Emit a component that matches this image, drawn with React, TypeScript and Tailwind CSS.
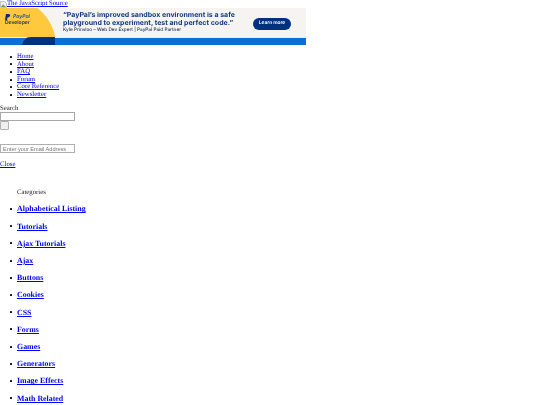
const navLinks = ["Home", "About", "FAQ", "Forum", "Core Reference", "Newsletter"];
const categories = [
  "Alphabetical Listing",
  "Tutorials",
  "Ajax Tutorials",
  "Ajax",
  "Buttons",
  "Cookies",
  "CSS",
  "Forms",
  "Games",
  "Generators",
  "Image Effects",
  "Math Related",
];

const Bullet = () => {
  return <span className="-ml-[7px] mr-[5px] h-[2px] w-[2px] shrink-0 rounded-[0.5px] bg-[#111]" />;
};

const PayPalBanner = () => {
  return (
    <div className="relative h-[37px] w-[306px] overflow-hidden bg-[#f5f4f1] font-['Inter',sans-serif]">
      <svg className="absolute left-0 top-0" width="306" height="37" viewBox="0 0 306 37">
        <path d="M0 0H37C47 7 54 20 55 37H0Z" fill="#ffc83d" />
        <rect x="0" y="29" width="306" height="8" fill="#0a6fd8" />
        <path d="M0 29H306V30H0Z" fill="#dff1fb" />
        <path d="M0 0H37C47 7 54 20 55 29H0Z" fill="#ffc83d" />
        <path d="M0 29H55V37H22C22 32 26 29 31 29Z" fill="#ffc83d" />
        <path d="M22 37C22 32 26 29 31 29H55V37Z" fill="#00307f" />
        <path d="M6 6H8.5C10 6 10.5 7 10 8C9.6 9 8.7 9.2 7.6 9.2L7 12H5Z" fill="#002a7a" />
      </svg>
      <div className="relative flex h-[29px] items-start">
        <div className="ml-[5px] mt-[5.5px] w-[58px] text-[5px] font-semibold leading-[6.5px] text-[#0f2a55]">
          <div className="pl-[8px] italic text-[#174a9c]">PayPal</div>
          <div>Developer</div>
        </div>
        <div className="mt-[2.5px] w-[185px] whitespace-nowrap text-[#143a80]">
          <div className="text-[7px] font-bold leading-[8.2px]">
            “PayPal’s improved sandbox environment is a safe
            <br />
            playground to experiment, test and perfect code.”
          </div>
          <div className="mt-[0.5px] text-[4.7px] font-medium leading-[6px] text-[#1a2f55]">
            Kyle Prinsloo – Web Dev Expert | PayPal Paid Partner
          </div>
        </div>
        <div className="ml-[5px] mt-[9.5px] flex h-[12px] w-[38px] items-center justify-center rounded-full bg-[#00307f] text-[4.8px] font-semibold text-white">
          Learn more
        </div>
      </div>
    </div>
  );
};

export default function App() {
  return (
    <div className="h-[405px] overflow-hidden bg-white font-['Liberation_Serif',serif] text-[6.75px] leading-[7.6px] text-[#222] blur-[0.35px] [text-rendering:geometricPrecision]">
      <a href="#" className="flex h-[8px] items-start text-[#0000ee] underline">
        <svg className="mt-[0.5px] shrink-0" width="7" height="7" viewBox="0 0 7 7">
          <path d="M0.5 0.5H4.5L6.5 2.5V6.5H0.5Z" fill="#e8eef5" stroke="#9aa5a5" strokeWidth="0.6" />
          <path d="M1 6L3 3.5L6 6Z" fill="#5fa34f" />
        </svg>
        The JavaScript Source
      </a>
      <PayPalBanner />
      <ul className="ml-[17px] mt-[8px] list-none">
        {navLinks.map((link) => (
          <li key={link} className="flex items-center">
            <Bullet />
            <a href="#" className="text-[#0000ee] underline">
              {link}
            </a>
          </li>
        ))}
      </ul>
      <div className="mt-[6px]">Search</div>
      <input className="block h-[9px] w-[75px] border border-[#a8a8a8] bg-white" />
      <button className="block h-[9px] w-[9px] rounded-[1px] border border-[#b0b0b0] bg-[#efefef]" />
      <input
        className="mt-[14px] block h-[9px] w-[75px] border border-[#b0b0b0] bg-white px-[2px] font-['Liberation_Sans',sans-serif] text-[5.6px] placeholder:text-[#757575]"
        placeholder="Enter your Email Address"
      />
      <a href="#" className="mt-[7.5px] block text-[#0000ee] underline">
        Close
      </a>
      <div className="ml-[17px] mt-[21px]">Categories</div>
      <ul className="ml-[17px] mt-[7.5px] flex list-none flex-col gap-[8px]">
        {categories.map((category) => (
          <li key={category} className="flex items-center text-[7.9px] font-bold leading-[9.2px]">
            <Bullet />
            <a href="#" className="text-[#0000ee] underline">
              {category}
            </a>
          </li>
        ))}
      </ul>
    </div>
  );
}
